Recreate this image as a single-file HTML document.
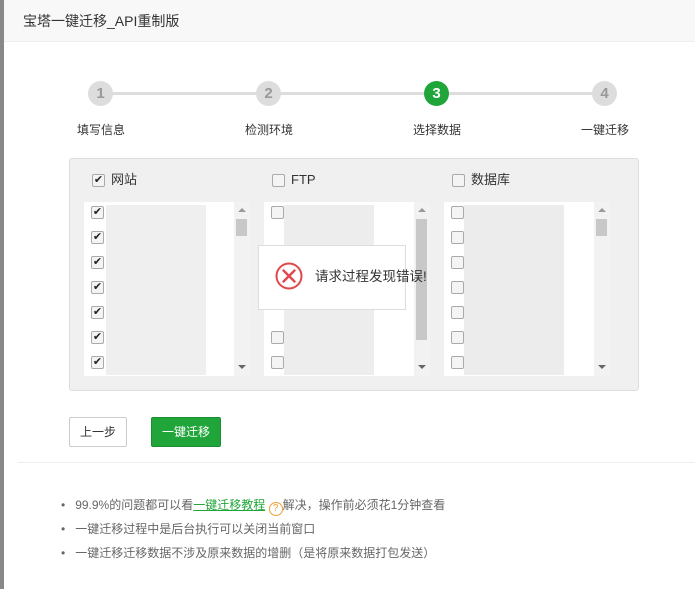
<!DOCTYPE html>
<html><head><meta charset="utf-8"><style>
*{margin:0;padding:0;box-sizing:border-box}
body{width:695px;height:589px;overflow:hidden;background:#fff;font-family:"Liberation Sans","Noto Sans CJK SC",sans-serif;position:relative;color:#333;line-height:1.2}
.a{position:absolute}
.hd{left:4px;top:0;width:691px;height:42px;background:#f8f8f8;border-bottom:1px solid #eee}
.circ{width:25px;height:25px;border-radius:50%;background:#ddd;color:#999;font-weight:bold;font-size:15px;text-align:center;line-height:25px}
.lbl{font-size:12px;color:#333;top:122px;line-height:16px}
.cb{width:13px;height:13px;border:1px solid #aaa;border-radius:2px;background:#f4f4f4;font-size:11px;line-height:11px;text-align:center;color:#222}
.list{background:#fff;width:150px;height:174px;top:202px}
.sb{width:16px;height:174px;top:202px;background:#f2f2f2}
.li{font-size:12px;color:#666;line-height:16px}
.h{font-size:13px;line-height:16px;top:172px}
.up,.dn{width:0;height:0;border-left:4px solid transparent;border-right:4px solid transparent}
.up{border-bottom:4px solid #999}.dn{border-top:4px solid #666}
</style></head><body>
<div class="a" style="left:0;top:0;width:4px;height:589px;background:#888"></div>
<div class="a hd"></div>
<div class="a" style="left:23px;top:12px;font-size:14px;line-height:18px;color:#333">宝塔一键迁移_API重制版</div>

<div class="a" style="left:112px;top:92px;width:480px;height:3px;background:#ddd"></div>
<div class="a circ" style="left:88px;top:81px">1</div>
<div class="a circ" style="left:256px;top:81px">2</div>
<div class="a circ" style="left:424px;top:81px;background:#20a53a;color:#fff">3</div>
<div class="a circ" style="left:592px;top:81px">4</div>
<div class="a lbl" style="left:77px">填写信息</div>
<div class="a lbl" style="left:245px">检测环境</div>
<div class="a lbl" style="left:413px">选择数据</div>
<div class="a lbl" style="left:581px">一键迁移</div>

<div class="a" style="left:69px;top:158px;width:570px;height:233px;background:#f0f0f0;border:1px solid #ddd;border-radius:3px"></div>
<div class="a cb" style="left:92px;top:174px">✔</div><div class="a h" style="left:111px">网站</div>
<div class="a cb" style="left:272px;top:174px"></div><div class="a h" style="left:291px">FTP</div>
<div class="a cb" style="left:452px;top:174px"></div><div class="a h" style="left:471px">数据库</div>

<div class="a list" style="left:84px"></div>
<div class="a list" style="left:264px"></div>
<div class="a list" style="left:444px"></div>
<div class="a sb" style="left:234px"></div><div class="a" style="left:236px;top:219px;width:11px;height:17px;background:#c8c8c8"></div>
<div class="a sb" style="left:414px"></div><div class="a" style="left:416px;top:219px;width:11px;height:121px;background:#c8c8c8"></div>
<div class="a sb" style="left:594px"></div><div class="a" style="left:596px;top:219px;width:11px;height:17px;background:#c8c8c8"></div>
<div class="a up" style="left:238px;top:208px"></div><div class="a dn" style="left:238px;top:365px"></div>
<div class="a up" style="left:418px;top:208px"></div><div class="a dn" style="left:418px;top:365px"></div>
<div class="a up" style="left:598px;top:208px"></div><div class="a dn" style="left:598px;top:365px"></div>
<div class="a" style="left:106px;top:205px;width:100px;height:170px;background:#efefef"></div>
<div class="a" style="left:284px;top:205px;width:90px;height:170px;background:#ededed"></div>
<div class="a" style="left:464px;top:205px;width:100px;height:170px;background:#ececec"></div>

<div class="a cb" style="left:91px;top:206px">✔</div><div class="a cb" style="left:91px;top:231px">✔</div><div class="a cb" style="left:91px;top:256px">✔</div><div class="a cb" style="left:91px;top:281px">✔</div><div class="a cb" style="left:91px;top:306px">✔</div><div class="a cb" style="left:91px;top:331px">✔</div><div class="a cb" style="left:91px;top:356px">✔</div>
<div class="a cb" style="left:271px;top:206px"></div><div class="a cb" style="left:271px;top:331px"></div><div class="a cb" style="left:271px;top:356px"></div>
<div class="a cb" style="left:451px;top:206px"></div><div class="a cb" style="left:451px;top:231px"></div><div class="a cb" style="left:451px;top:256px"></div><div class="a cb" style="left:451px;top:281px"></div><div class="a cb" style="left:451px;top:306px"></div><div class="a cb" style="left:451px;top:331px"></div><div class="a cb" style="left:451px;top:356px"></div>

<div class="a" style="left:258px;top:245px;width:148px;height:65px;background:#fff;border:1px solid #ddd"></div>
<svg class="a" style="left:274px;top:262px" width="30" height="30" viewBox="0 0 30 30"><circle cx="15" cy="14" r="12.5" fill="none" stroke="#e0484b" stroke-width="2"/><path d="M9.5 8.5L20.5 19.5M20.5 8.5L9.5 19.5" stroke="#e0484b" stroke-width="2.4" stroke-linecap="round"/></svg>
<div class="a" style="left:315px;top:268px;font-size:13.5px;line-height:17px">请求过程发现错误!</div>

<div class="a" style="left:69px;top:417px;width:58px;height:30px;border:1px solid #ccc;border-radius:2px;font-size:12px;text-align:center;line-height:28px">上一步</div>
<div class="a" style="left:151px;top:417px;width:70px;height:30px;background:#20a53a;border:1px solid #1a8f30;border-radius:2px;color:#fff;font-size:12px;text-align:center;line-height:28px">一键迁移</div>

<div class="a" style="left:18px;top:462px;width:677px;height:1px;background:#eee"></div>
<div class="a li" style="left:61px;top:497px">•&nbsp;&nbsp;&nbsp;99.9%的问题都可以看<span style="color:#20a53a;text-decoration:underline">一键迁移教程</span> <span style="display:inline-block;width:14px;height:14px;border:1px solid #f0a030;border-radius:50%;color:#f0a030;font-size:10px;text-align:center;line-height:12px;vertical-align:-2px">?</span>解决，操作前必须花1分钟查看</div>
<div class="a li" style="left:61px;top:521px">•&nbsp;&nbsp;&nbsp;一键迁移过程中是后台执行可以关闭当前窗口</div>
<div class="a li" style="left:61px;top:545px">•&nbsp;&nbsp;&nbsp;一键迁移迁移数据不涉及原来数据的增删（是将原来数据打包发送）</div>
</body></html>
